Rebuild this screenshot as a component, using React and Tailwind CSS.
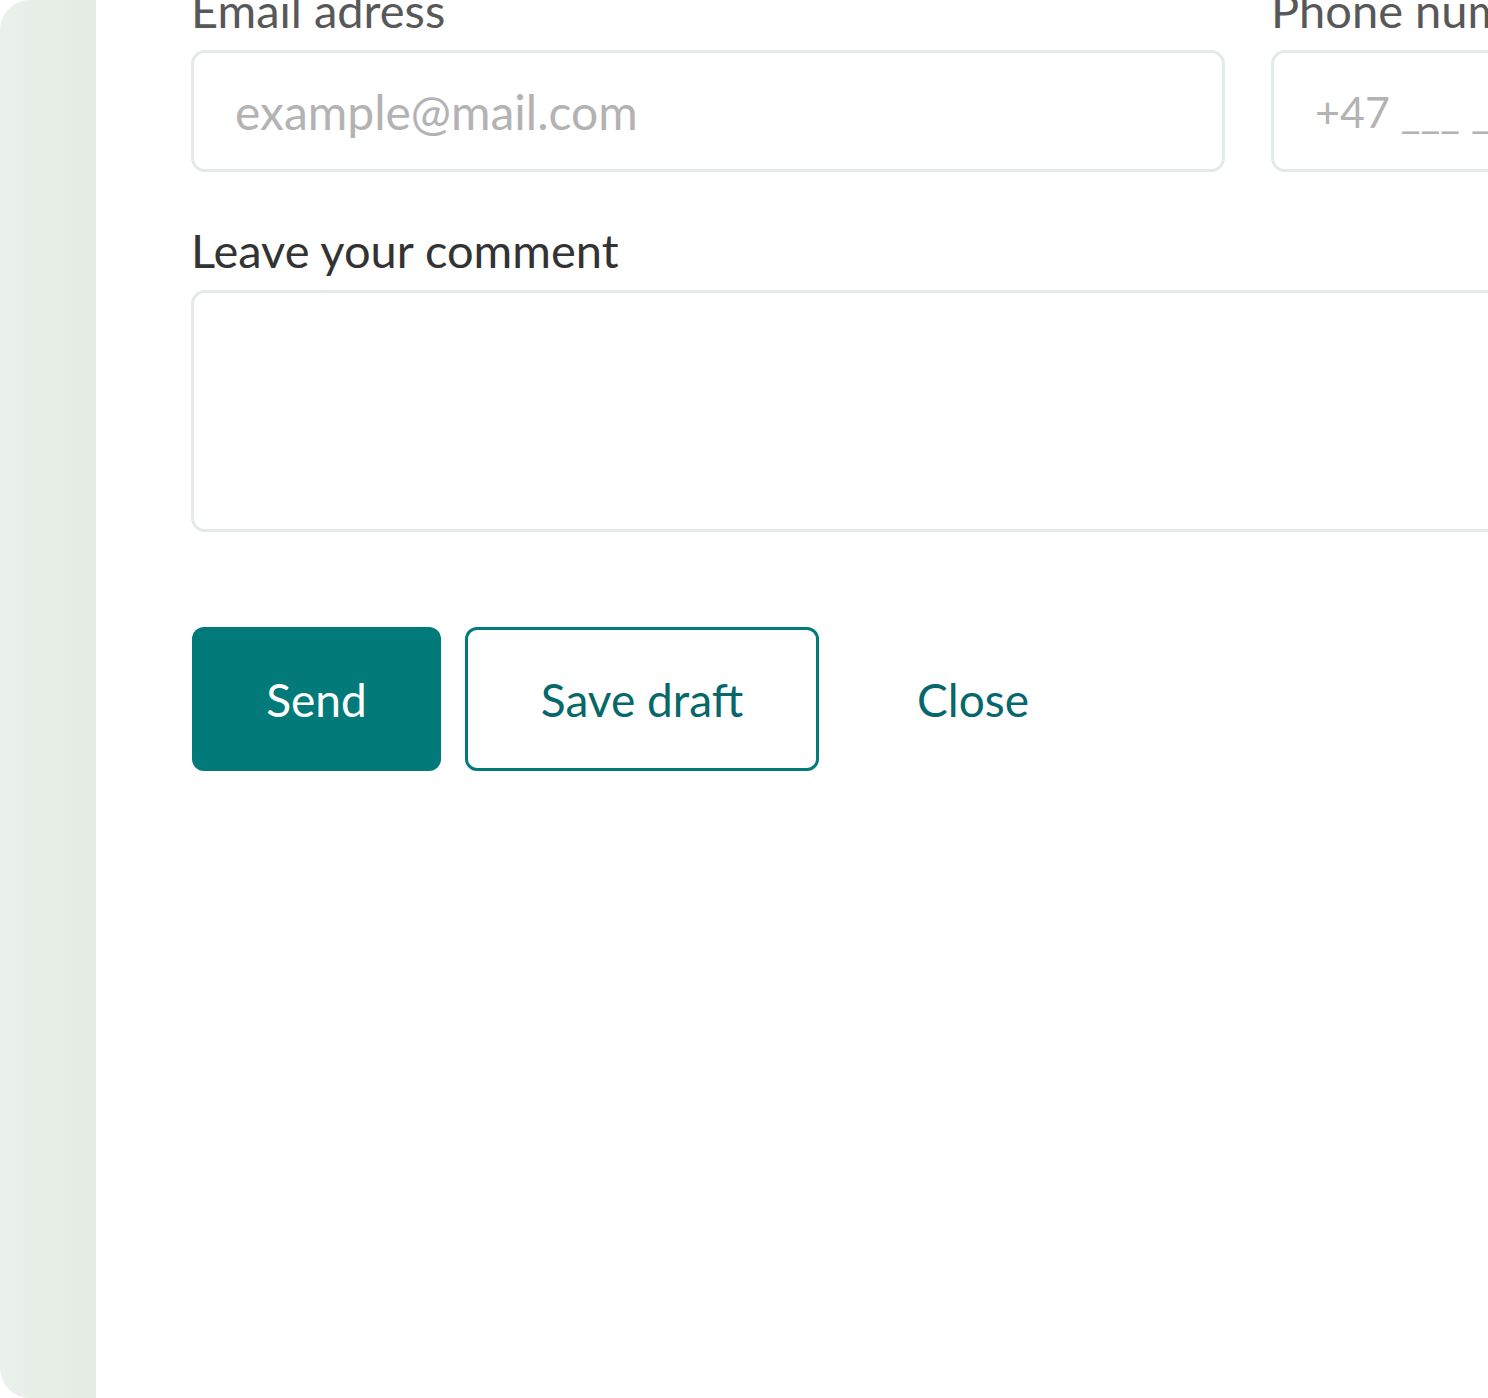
import React from 'react';

const inputClass =
  'block w-full rounded-[14px] border-[3px] border-[#e4e9e9] bg-white px-[41px] text-[#333] outline-none placeholder:text-[#b3b3b3]';

const Field = ({ label, labelColor, children }) => (
  <label className="flex flex-col">
    <span className={`text-[47px] leading-[56px] ${labelColor}`}>{label}</span>
    <div className="mt-[12px]">{children}</div>
  </label>
);

export default function App() {
  return (
    <div className="flex h-[1398px] overflow-hidden bg-white font-['Lato',sans-serif]">
      <aside className="w-[96px] shrink-0 rounded-l-[30px] bg-linear-to-r from-[#eaf1ea] to-[#e3ebe3]" />

      <main className="min-w-0 flex-1 overflow-hidden pl-[95px]">
        <form className="-mt-[18px] w-[2114px]" onSubmit={(e) => e.preventDefault()}>
          <div className="grid grid-cols-[1034px_1034px] gap-x-[46px]">
            <Field label="Email adress" labelColor="text-[#585858]">
              <input type="email" placeholder="example@mail.com" className={`${inputClass} h-[122px] text-[48px]`} />
            </Field>
            <Field label="Phone number" labelColor="text-[#585858]">
              <input type="tel" placeholder="+47 ___ ___ ___" className={`${inputClass} h-[122px] text-[43px]`} />
            </Field>
          </div>

          <div className="mt-[50px]">
            <Field label="Leave your comment" labelColor="text-[#333]">
              <textarea className={`${inputClass} h-[242px] resize-none py-[30px] text-[48px]`} />
            </Field>
          </div>

          <div className="mt-[95px] ml-[1px] flex gap-[24px]">
            <button
              type="submit"
              className="h-[144px] w-[249px] rounded-[12px] bg-[#027a7a] text-[46px] text-white"
            >
              Send
            </button>
            <button
              type="button"
              className="h-[144px] w-[354px] rounded-[12px] border-[3px] border-[#047a7a] bg-white text-[46px] text-[#06686a]"
            >
              Save draft
            </button>
            <button
              type="button"
              className="h-[144px] w-[260px] rounded-[12px] bg-transparent text-[46px] text-[#06686a]"
            >
              Close
            </button>
          </div>
        </form>
      </main>
    </div>
  );
}
